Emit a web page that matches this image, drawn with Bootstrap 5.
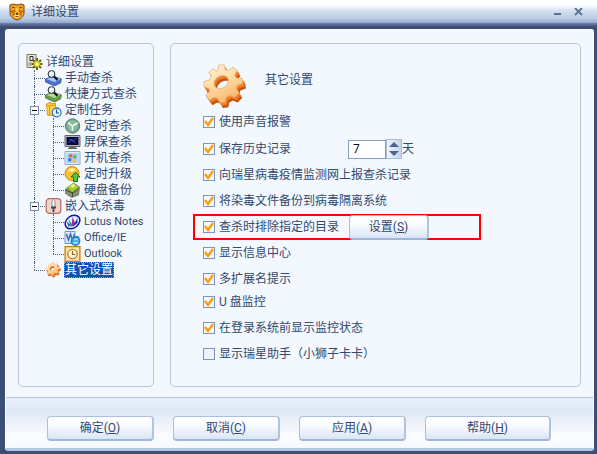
<!DOCTYPE html>
<html lang="zh-CN">
<head>
<meta charset="utf-8">
<meta name="viewport" content="width=device-width, initial-scale=1">
<title>详细设置</title>
<link href="https://cdn.jsdelivr.net/npm/bootstrap@5.3.0/dist/css/bootstrap.min.css" rel="stylesheet">
<style>
body{font:12px/16px Roboto,"Noto Sans CJK SC",sans-serif;color:#33486e;background:#3b4e75}
.titlebar{height:23px;padding:0 9px;background:linear-gradient(#fff 0,#fafcff 25%,#d5e1f0 45%,#b9cbe2 80%,#8ea9cf 100%)}
.titlebar h1{font-size:12px;line-height:16px;padding-left:6px}
.win-btn{width:20px;height:16px;line-height:0}
.frame{background:linear-gradient(#6f84aa,#3b4e75 4px,#3b4e75);padding:6px 3px 3px 5px}
.sheet{background:#f2f8fe;border:1px solid #fff;border-bottom:3px solid #b4c7e2;border-radius:3px}
.main-area{padding:13px 12px 10px;gap:16px}
.pane{border:1px solid #b6c6dc;border-radius:5px}
.tree-pane{width:136px;padding:10px 7px}
.options-pane{padding:20px 32px 10px}
.options-title{font-size:12px;line-height:16px;padding:8px 0 0 18px}
.tree,.tree ul{list-style:none;margin:0;padding:0}
.tree ul{margin-left:4px}
.tree ul li{position:relative;padding-left:15px}
.tree ul li::before{content:"";position:absolute;left:4px;top:0;bottom:0;border-left:1px dotted #53627e}
.tree ul li:last-child::before{bottom:auto;height:8px}
.tree ul li::after{content:"";position:absolute;left:4px;top:8px;width:11px;border-top:1px dotted #53627e}
.node{height:16px;gap:3px;white-space:nowrap}
.node svg{width:17px;height:16px;margin-right:-1px;flex:none}
.node a{color:inherit;text-decoration:none;padding:0 1px}
.node a.chosen{background:#0a53b4;color:#fff;outline:1px dotted #d99a50;outline-offset:-1px}
.latin{font-size:11px}
.twisty{position:absolute;z-index:2;left:0;top:4px;width:9px;height:9px;padding:0;border:1px solid #7890b0;background:#fff}
.twisty::before{content:"";position:absolute;left:1px;top:3px;width:5px;border-top:1px solid #000}
.option{height:20px;gap:4px}
.option .form-check-input{width:12px;height:12px;margin:0;border:1px solid #7b95bf;border-radius:0;background-color:#eef2fa;flex:none}
.option .form-check-input:checked{background-color:#f4f8ff;background-size:12px 12px;background-image:url("data:image/svg+xml,%3Csvg xmlns='http://www.w3.org/2000/svg' viewBox='0 0 12 12'%3E%3Cpath d='M2 5l3 4 5-7' fill='none' stroke='%23ff9d0a' stroke-width='2.4'/%3E%3C/svg%3E")}
.group{gap:6px}
.group + .group{padding-top:3px}
.first-option{padding-bottom:1px;height:21px}
.days-label{width:125px}
.days{width:38px;height:19px;padding:0 4px;border:1px solid #7f9fc7;border-radius:0;background:#fff;color:#111;font-size:12px}
.spin{width:16px;height:20px;border:1px solid #a9bcd8;background:linear-gradient(90deg,#f1f6fd,#c5d4ea)}
.spin button{border:0;padding:0;background:none;height:9px;line-height:0}
.flagged{border:2px solid #f00;width:288px;height:26px;margin:-3px 0 -3px -10px;padding:0 8px}
.cmd{--bs-btn-color:#33486e;--bs-btn-hover-color:#33486e;--bs-btn-border-color:#abc0dd;--bs-btn-hover-border-color:#7fa0cf;--bs-btn-border-radius:4px;--bs-btn-padding-y:0;font-size:12px;line-height:16px;height:25px;border-bottom:2px solid #9fb7d8;border-right:2px solid #b0c4e0;background:linear-gradient(#fff,#f8fbff 40%,#d9e5f5)}
.set-btn{width:80px;margin:0 0 0 6px;flex:none}
.actions{border-top:1px solid #b5c6de;padding:18px 41px 7px;gap:19px;background:linear-gradient(#e9f1fb,#dde7f4 12px,#fafcff 75%,#f5f9ff)}
.actions .cmd{flex:0 1 107px}
.actions .cmd:last-child{flex-basis:126px}
</style>
<script src="https://cdn.jsdelivr.net/npm/bootstrap@5.3.0/dist/js/bootstrap.bundle.min.js"></script>
</head>
<body class="min-vh-100 d-flex flex-column">
<header class="titlebar d-flex align-items-center">
  <svg width="16" height="18" viewBox="0 0 16 18" aria-hidden="true"><path d="M1 2l3-1 4 1 4-1 3 1v8c0 4-4 6-7 7-3-1-7-3-7-7z" fill="#f2a21d" stroke="#7a4312"/><path d="M3 4l3 1M13 4l-3 1M2 8l3 2M14 8l-3 2M3.500 12l2-1M12.500 12l-2-1" stroke="#7c330e"/><path d="M4 7l3 1-1 1zM12 7l-3 1 1 1z" fill="#301a10"/><path d="M7 5h2l1 6H6z" fill="#ffc94a"/><path d="M5.500 12h5l-1 3h-3z" fill="#ffe083"/><path d="M7 10h2l-1 2zM6.500 13.500h3" fill="#792814" stroke="#792814" stroke-width=".8"/></svg>
  <h1 class="m-0 fw-normal flex-grow-1">详细设置</h1>
  <button class="win-btn btn p-0 border-0" aria-label="最小化"><svg width="8" height="8" viewBox="0 0 8 8"><path d="M0 6h7" stroke="#5c7097" stroke-width="2"/></svg></button>
  <button class="win-btn btn p-0 border-0" aria-label="关闭"><svg width="9" height="8" viewBox="0 0 9 8"><path d="M1 0l7 7M8 0L1 7" stroke="#5c7097" stroke-width="1.8"/></svg></button>
</header>
<div class="frame flex-grow-1 d-flex">
<div class="sheet flex-grow-1 d-flex flex-column">
<main class="main-area flex-grow-1 d-flex">
  <nav class="pane tree-pane flex-shrink-0" aria-label="设置分类">
    <ul class="tree">
      <li>
        <div class="node d-flex align-items-center"><svg viewBox="0 0 16 16"><path d="M.5.5h9v13h-9z" fill="#eee9d4" stroke="#7a7662"/><path d="M3.500 2.500h3v4h-3z" fill="#fff" stroke="#222"/><path d="M2 9h3M2 11h3" stroke="#777"/><path d="M10.500 4v12M5 10h11M6.500 6l8 8M14.500 6l-8 8" stroke="#66620a" stroke-width="2"/><circle cx="10.500" cy="10" r="3.300" fill="#e4dc32" stroke="#8c870c" stroke-width=".7"/><circle cx="10.500" cy="10" r="1.200" fill="#fff"/></svg><a href="#">详细设置</a></div>
        <ul>
          <li><div class="node d-flex align-items-center"><svg viewBox="0 0 16 16"><path d="M0 9l7-3 9 3-1 4-6 3-9-4z" fill="#4c75d2" stroke="#25458f" stroke-width=".7"/><path d="M1 9l6-2 8 2-6 3z" fill="#a9cbf6"/><path d="M8 6l4 4" stroke="#111" stroke-width="2"/><circle cx="6" cy="4" r="3.4" fill="#e9faff" stroke="#222"/></svg><a href="#">手动查杀</a></div></li>
          <li><div class="node d-flex align-items-center"><svg viewBox="0 0 16 16"><path d="M0 9l7-3 9 3-1 4-6 3-9-4z" fill="#649e45" stroke="#2f652a" stroke-width=".7"/><path d="M1 9l6-2 8 2-6 3z" fill="#b6dd91"/><path d="M8 6l4 4" stroke="#111" stroke-width="2"/><circle cx="6" cy="4" r="3.4" fill="#e9faff" stroke="#222"/></svg><a href="#">快捷方式查杀</a></div></li>
          <li><button class="twisty" aria-label="折叠定制任务"></button>
            <div class="node d-flex align-items-center"><svg viewBox="0 0 16 16"><path d="M1 2l4-2v2l5-1v4l3 1-3 8-8-1z" fill="#ffd246" stroke="#d08a00" stroke-width=".8"/><path d="M4 4v10M1 3l3 1 6-1" fill="none" stroke="#e39a0c"/><circle cx="11.2" cy="10.5" r="4.4" fill="#e8f6ff" stroke="#2474c4" stroke-width="1.2"/><path d="M11 7.500v3.500h2.500" fill="none" stroke="#1c4e88" stroke-width="1.2"/></svg><a href="#">定制任务</a></div>
            <ul>
              <li><div class="node d-flex align-items-center"><svg viewBox="0 0 16 16"><circle cx="8" cy="8" r="7.2" fill="#74a68c" stroke="#5a8572"/><circle cx="8" cy="7.500" r="5.2" fill="#8fbca0"/><path d="M3.500 4.500L8 8l5-3M8 8v5" fill="none" stroke="#e9fff0" stroke-width="1.5"/></svg><a href="#">定时查杀</a></div></li>
              <li><div class="node d-flex align-items-center"><svg viewBox="0 0 16 16"><path d="M.5 1.500h15v11H.5z" fill="#b9bbc0" stroke="#62656c"/><path d="M2 3h12v8H2z" fill="#07083a"/><path d="M4 9l3-4 2 2 3-3M5 5l6 4" stroke="#4456ca" fill="none"/><path d="M5 13h6l2 2H3z" fill="#5f626a"/></svg><a href="#">屏保查杀</a></div></li>
              <li><div class="node d-flex align-items-center"><svg viewBox="0 0 16 16"><path d="M.5 1.500h15v13H.5z" fill="#e3eefa" stroke="#93a9c8"/><path d="M2 3h12v10H2z" fill="#a9d3f7"/><path d="M5 4l3 .5-.5 3L4 7z" fill="#ef5b2a"/><path d="M9 5l3 .5-.5 3L8.500 8z" fill="#5db43d"/><path d="M4 8l3 .5-.5 3L3.500 11z" fill="#3272dc"/><path d="M8.300 9l3 .5-.5 3-3-.5z" fill="#f9c524"/></svg><a href="#">开机查杀</a></div></li>
              <li><div class="node d-flex align-items-center"><svg viewBox="0 0 16 16"><circle cx="7.500" cy="7.500" r="7" fill="#ffc02d" stroke="#db8108"/><path d="M3 5c2-3 6-4 8-1-2 2-5 2-8 1z" fill="#fff1a0"/><path d="M11 6l4.500 5H13v4.500H9V11H6.500z" fill="#54c733" stroke="#167019"/></svg><a href="#">定时升级</a></div></li>
              <li><div class="node d-flex align-items-center"><svg viewBox="0 0 16 16"><path d="M1 7l8-6 6 4-1 8-7 2.500-6-4z" fill="#85906f" stroke="#6b7260" stroke-width=".8"/><path d="M3 5l6-4 5 4-6 5z" fill="#a9cf27"/><path d="M6 4l3-2 2 2-3 2z" fill="#e8f58c"/><path d="M8 10v5M1 8l7 3 6-4" fill="none" stroke="#3f4f2c"/></svg><a href="#">硬盘备份</a></div></li>
            </ul>
          </li>
          <li><button class="twisty" aria-label="折叠嵌入式杀毒"></button>
            <div class="node d-flex align-items-center"><svg viewBox="0 0 16 16"><rect x=".7" y=".7" width="14.600" height="14.600" rx="3" fill="#f2d3c9" stroke="#b3695d" stroke-width="1.2"/><path d="M6.500 9V3L8 1.500 9.500 3v6z" fill="#fff" stroke="#77777f" stroke-width=".8"/><path d="M5.500 9.500h5M8 9.500v4.500" stroke="#494954" stroke-width="1.8"/></svg><a href="#">嵌入式杀毒</a></div>
            <ul>
              <li><div class="node d-flex align-items-center"><svg viewBox="0 0 16 16"><ellipse cx="8" cy="8" rx="8" ry="6" transform="rotate(-38 8 8)" fill="#e8e8ff" stroke="#0c189e" stroke-width="1.5"/><path d="M4 13L2 7l4 4z" fill="#2459ce"/><path d="M6 13L4 5l4 6z" fill="#2d9e52"/><path d="M7 13l1-10 3 7z" fill="#9a2aa7"/><path d="M8 13l5-9v5z" fill="#1b32b6"/></svg><a href="#" class="latin">Lotus Notes</a></div></li>
              <li><div class="node d-flex align-items-center"><svg viewBox="0 0 16 16"><path d="M.5 1.500h10v12H.5z" fill="#d9e8fb" stroke="#7597cb"/><path d="M2 4l2 6 2-6 2 6 2-6" fill="none" stroke="#3465b0" stroke-width="1.4"/><circle cx="11" cy="11" r="4" fill="#9ddcff" stroke="#258bd3" stroke-width="1.8"/><path d="M8 11h6M6 14c2-5 6-8 9-7" fill="none" stroke="#187fc9"/></svg><a href="#" class="latin">Office/IE</a></div></li>
              <li><div class="node d-flex align-items-center"><svg viewBox="0 0 16 16"><path d="M.6.600h14.800v14.800H.6z" fill="#ffe3a1" stroke="#c27c1e" stroke-width="1.3"/><circle cx="8" cy="8" r="4.700" fill="#fff8de" stroke="#b9802c" stroke-width="1.3"/><path d="M8 5v3.500h3" fill="none" stroke="#9a5f12" stroke-width="1.2"/></svg><a href="#" class="latin">Outlook</a></div></li>
            </ul>
          </li>
          <li><div class="node d-flex align-items-center"><svg viewBox="0 0 44 46"><use href="#gear"/></svg><a href="#" class="chosen" aria-current="page">其它设置</a></div></li>
        </ul>
      </li>
    </ul>
  </nav>
  <section class="pane options-pane flex-grow-1">
    <div class="d-flex">
      <svg width="44" height="44" viewBox="0 0 44 44" aria-hidden="true">
        <defs><linearGradient id="face" x1=".1" y1="0" x2=".6" y2="1"><stop stop-color="#fff0d6"/><stop offset=".5" stop-color="#ffdba6"/><stop offset="1" stop-color="#f9b568"/></linearGradient><path id="cog" stroke-linejoin="round" fill-rule="evenodd" d="M16 6L17 1h6l1 5 4 1 4-4 5 4-3 5 2 3h6l1 6-6 2-1 4 3 4-5 5-5-2-4 2-1 5-6 1-2-5-4-1-5 3-4-5 4-5-1-3-5-1v-6l6-2 2-4-3-4 5-4 4 3zM24 13c-6-2-12 3-12 8 0 7 10 7 14 1 2-4 1-8-2-9z"/>
        <g id="gear"><use href="#cog" transform="translate(3 5) scale(.93)" fill="#c4500f"/><use href="#cog" transform="translate(2 3) scale(.93)" fill="#e56d1a"/><use href="#cog" transform="translate(1 2) scale(.93)" fill="#ee8431"/><use href="#cog" transform="scale(.93)" fill="url(#face)" stroke="#e29a52" stroke-width=".6"/></g></defs>
        <use href="#gear"/>
      </svg>
      <h2 class="options-title m-0 fw-normal">其它设置</h2>
    </div>
    <form class="pt-1">
      <div class="group d-flex flex-column">
        <div class="option first-option d-flex align-items-center"><input class="form-check-input" type="checkbox" id="o1" checked><label for="o1">使用声音报警</label></div>
        <div class="option d-flex align-items-center"><input class="form-check-input" type="checkbox" id="o2" checked><label class="days-label" for="o2">保存历史记录</label><div class="d-flex align-items-center"><input class="days form-control" type="text" value="7" aria-label="保存天数" id="days"><span class="spin d-flex flex-column"><button type="button" aria-label="增加"><svg width="10" height="5" viewBox="0 0 10 5"><path d="M5 0l5 5H0z" fill="#4a6593"/></svg></button><button type="button" aria-label="减少"><svg width="10" height="5" viewBox="0 0 10 5"><path d="M5 5l5-5H0z" fill="#4a6593"/></svg></button></span><span>天</span></div></div>
        <div class="option d-flex align-items-center"><input class="form-check-input" type="checkbox" id="o3" checked><label for="o3">向瑞星病毒疫情监测网上报查杀记录</label></div>
        <div class="option d-flex align-items-center"><input class="form-check-input" type="checkbox" id="o4" checked><label for="o4">将染毒文件备份到病毒隔离系统</label></div>
        <div class="option flagged d-flex align-items-center"><input class="form-check-input" type="checkbox" id="o5" checked><label for="o5">查杀时排除指定的目录</label><button type="button" class="btn cmd set-btn">设置(<u>S</u>)</button></div>
        <div class="option d-flex align-items-center"><input class="form-check-input" type="checkbox" id="o6" checked><label for="o6">显示信息中心</label></div>
        <div class="option d-flex align-items-center"><input class="form-check-input" type="checkbox" id="o7" checked><label for="o7">多扩展名提示</label></div>
      </div>
      <div class="group d-flex flex-column">
        <div class="option d-flex align-items-center"><input class="form-check-input" type="checkbox" id="o8" checked><label for="o8">U 盘监控</label></div>
        <div class="option d-flex align-items-center"><input class="form-check-input" type="checkbox" id="o9" checked><label for="o9">在登录系统前显示监控状态</label></div>
        <div class="option d-flex align-items-center"><input class="form-check-input" type="checkbox" id="o10"><label for="o10">显示瑞星助手（小狮子卡卡）</label></div>
      </div>
    </form>
  </section>
</main>
<footer class="actions d-flex">
  <button class="btn cmd">确定(<u>O</u>)</button>
  <button class="btn cmd">取消(<u>C</u>)</button>
  <button class="btn cmd">应用(<u>A</u>)</button>
  <button class="btn cmd">帮助(<u>H</u>)</button>
</footer>
</div>
</div>
</body>
</html>
